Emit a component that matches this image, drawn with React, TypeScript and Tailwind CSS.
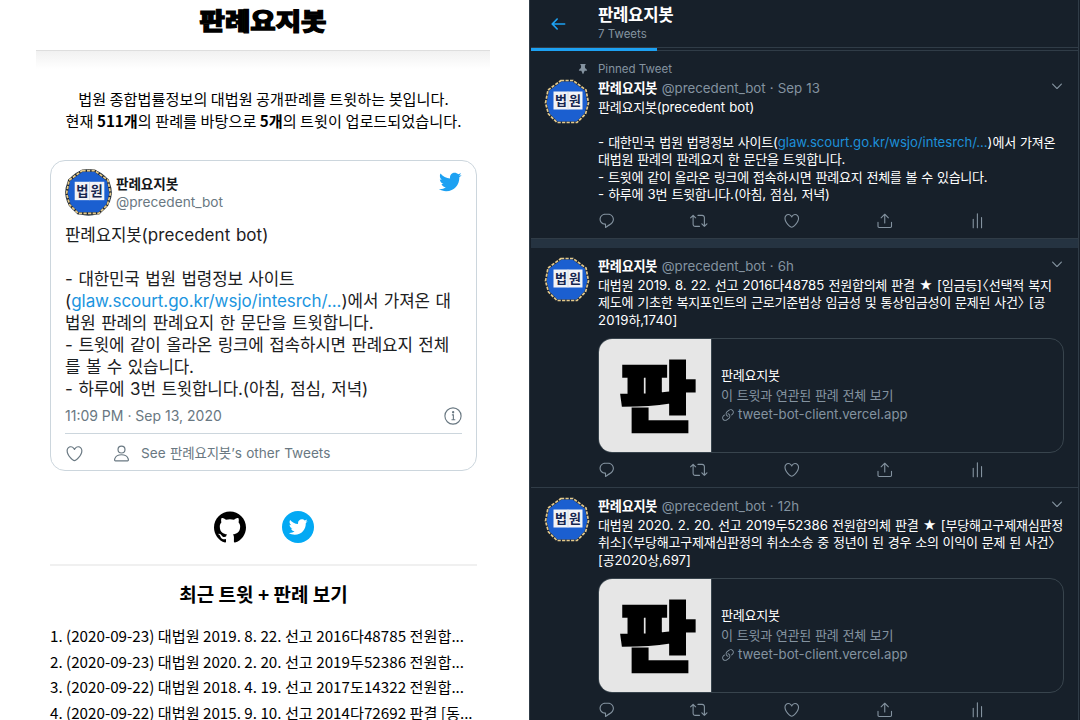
import type { ReactNode } from "react";

const P = {
  reply: ["M14.046 2.242l-4.148-.01h-.002c-4.374 0-7.8 3.427-7.8 7.802 0 4.098 3.186 7.206 7.465 7.37v3.828c0 .108.044.286.12.403.142.225.384.347.632.347.138 0 .277-.038.402-.118.264-.168 6.473-4.14 8.088-5.506 1.902-1.61 3.04-3.97 3.043-6.312v-.017c-.006-4.367-3.43-7.787-7.8-7.788zm3.787 12.972c-1.134.96-4.862 3.405-6.772 4.643V16.67c0-.414-.335-.75-.75-.75h-.396c-3.66 0-6.318-2.476-6.318-5.886 0-3.534 2.768-6.302 6.3-6.302l4.147.01h.002c3.532 0 6.3 2.766 6.302 6.296-.003 1.91-.942 3.844-2.514 5.176z"],
  retweet: ["M23.77 15.67c-.292-.293-.767-.293-1.06 0l-2.22 2.22V7.65c0-2.068-1.683-3.75-3.75-3.75h-5.85c-.414 0-.75.336-.75.75s.336.75.75.75h5.85c1.24 0 2.25 1.01 2.25 2.25v10.24l-2.22-2.22c-.293-.293-.768-.293-1.06 0s-.294.768 0 1.06l3.5 3.5c.145.147.337.22.53.22s.383-.072.53-.22l3.5-3.5c.294-.292.294-.767 0-1.06zm-10.66 3.28H7.26c-1.24 0-2.25-1.01-2.25-2.25V6.46l2.22 2.22c.148.147.34.22.532.22s.384-.073.53-.22c.293-.293.293-.768 0-1.06l-3.5-3.5c-.293-.294-.768-.294-1.06 0l-3.5 3.5c-.294.292-.294.767 0 1.06s.767.293 1.06 0l2.22-2.22V16.7c0 2.068 1.683 3.75 3.75 3.75h5.85c.414 0 .75-.336.75-.75s-.337-.75-.75-.75z"],
  like: ["M12 21.638h-.014C9.403 21.59 1.95 14.856 1.95 8.478c0-3.064 2.525-5.754 5.403-5.754 2.29 0 3.83 1.58 4.646 2.73.814-1.148 2.354-2.73 4.645-2.73 2.88 0 5.404 2.69 5.404 5.755 0 6.376-7.454 13.11-10.037 13.157H12zM7.354 4.225c-2.08 0-3.903 1.988-3.903 4.255 0 5.74 7.034 11.596 8.55 11.658 1.518-.062 8.55-5.917 8.55-11.658 0-2.267-1.823-4.255-3.903-4.255-2.528 0-3.94 2.936-3.952 2.965-.23.562-1.156.562-1.387 0-.014-.03-1.425-2.965-3.954-2.965z"],
  share: [
    "M17.53 7.47l-5-5c-.293-.293-.768-.293-1.06 0l-5 5c-.294.293-.294.768 0 1.06s.767.294 1.06 0l3.72-3.72V15c0 .414.336.75.75.75s.75-.336.75-.75V4.81l3.72 3.72c.146.147.338.22.53.22s.384-.072.53-.22c.293-.293.293-.767 0-1.06z",
    "M19.708 21.944H4.292C3.028 21.944 2 20.916 2 19.652V14c0-.414.336-.75.75-.75s.75.336.75.75v5.652c0 .437.355.792.792.792h15.416c.437 0 .792-.355.792-.792V14c0-.414.336-.75.75-.75s.75.336.75.75v5.652c0 1.264-1.028 2.292-2.292 2.292z",
  ],
  back: ["M20 11H7.414l4.293-4.293c.39-.39.39-1.023 0-1.414s-1.023-.39-1.414 0l-6 6c-.39.39-.39 1.023 0 1.414l6 6c.195.195.45.293.707.293s.512-.098.707-.293c.39-.39.39-1.023 0-1.414L7.414 13H20c.553 0 1-.447 1-1s-.447-1-1-1z"],
  pin: ["M20.235 14.61c-.375-1.745-2.342-3.506-4.01-4.125l-.544-4.948 1.495-2.242c.157-.236.172-.538.037-.787-.134-.25-.392-.403-.675-.403h-9.14c-.284 0-.542.154-.676.403-.134.25-.12.553.038.788l1.498 2.247-.484 4.943c-1.668.62-3.633 2.38-4.004 4.116-.04.16-.016.404.132.594.103.132.304.29.68.29H8.64l2.904 6.712c.078.184.26.302.458.302s.38-.118.46-.302l2.903-6.713h4.057c.376 0 .576-.156.68-.286.146-.188.172-.434.135-.59z"],
  caret: ["M20.207 8.147c-.39-.39-1.023-.39-1.414 0L12 14.94 5.207 8.147c-.39-.39-1.023-.39-1.414 0-.39.39-.39 1.023 0 1.414l7.5 7.5c.195.196.45.294.707.294s.512-.098.707-.293l7.5-7.5c.39-.39.39-1.022 0-1.413z"],
  link: [
    "M11.96 14.945c-.067 0-.136-.01-.203-.027-1.13-.318-2.097-.986-2.795-1.932-.832-1.125-1.176-2.508-.968-3.893s.942-2.605 2.068-3.438l3.53-2.608c2.322-1.716 5.61-1.224 7.33 1.1.83 1.127 1.175 2.51.967 3.895s-.943 2.605-2.07 3.438l-1.48 1.094c-.333.246-.804.175-1.05-.158-.246-.334-.176-.804.158-1.05l1.48-1.095c.803-.592 1.327-1.463 1.476-2.45.148-.988-.098-1.975-.69-2.778-1.225-1.656-3.572-2.01-5.23-.784l-3.53 2.608c-.802.593-1.326 1.464-1.475 2.45-.15.99.097 1.975.69 2.778.498.675 1.187 1.15 1.992 1.377.4.114.633.528.52.928-.092.33-.394.547-.722.547z",
    "M7.27 22.054c-1.61 0-3.197-.735-4.225-2.125-.832-1.127-1.176-2.51-.968-3.894s.943-2.605 2.07-3.438l1.478-1.094c.334-.245.805-.175 1.05.158s.177.804-.157 1.05l-1.48 1.095c-.803.593-1.326 1.464-1.475 2.45-.148.99.097 1.975.69 2.778 1.225 1.657 3.57 2.01 5.23.785l3.528-2.608c1.658-1.225 2.01-3.57.785-5.23-.498-.674-1.187-1.15-1.992-1.376-.4-.113-.633-.527-.52-.927.112-.4.528-.63.926-.522 1.13.318 2.096.986 2.794 1.932 1.717 2.324 1.224 5.612-1.1 7.33l-3.53 2.608c-.933.693-2.023 1.026-3.105 1.026z",
  ],
  bird: ["M23.643 4.937c-.835.37-1.732.62-2.675.733.962-.576 1.7-1.49 2.048-2.578-.9.534-1.897.922-2.958 1.13-.85-.904-2.06-1.47-3.4-1.47-2.572 0-4.658 2.086-4.658 4.66 0 .364.042.718.12 1.06-3.873-.195-7.304-2.05-9.602-4.868-.4.69-.63 1.49-.63 2.342 0 1.616.823 3.043 2.072 3.878-.764-.025-1.482-.234-2.11-.583v.06c0 2.257 1.605 4.14 3.737 4.568-.392.106-.803.162-1.227.162-.3 0-.593-.028-.877-.082.593 1.85 2.313 3.198 4.352 3.234-1.595 1.25-3.604 1.995-5.786 1.995-.376 0-.747-.022-1.112-.065 2.062 1.323 4.51 2.093 7.14 2.093 8.57 0 13.255-7.098 13.255-13.254 0-.2-.005-.402-.014-.602.91-.658 1.7-1.477 2.323-2.41z"],
  github: ["M12 .297c-6.63 0-12 5.373-12 12 0 5.303 3.438 9.8 8.205 11.385.6.113.82-.258.82-.577 0-.285-.01-1.04-.015-2.04-3.338.724-4.042-1.61-4.042-1.61C4.422 18.07 3.633 17.7 3.633 17.7c-1.087-.744.084-.729.084-.729 1.205.084 1.838 1.236 1.838 1.236 1.07 1.835 2.809 1.305 3.495.998.108-.776.417-1.305.76-1.605-2.665-.3-5.466-1.332-5.466-5.93 0-1.31.465-2.38 1.235-3.22-.135-.303-.54-1.523.105-3.176 0 0 1.005-.322 3.3 1.23.96-.267 1.98-.399 3-.405 1.02.006 2.04.138 3 .405 2.28-1.552 3.285-1.23 3.285-1.23.645 1.653.24 2.873.12 3.176.765.84 1.23 1.91 1.23 3.22 0 4.61-2.805 5.625-5.475 5.92.42.36.81 1.096.81 2.22 0 1.606-.015 2.896-.015 3.286 0 .315.21.69.825.57C20.565 22.092 24 17.592 24 12.297c0-6.627-5.373-12-12-12"],
};

function Icon({ name, className }: { name: keyof typeof P; className: string }) {
  return (
    <svg viewBox="0 0 24 24" fill="currentColor" className={className}>
      {P[name].map((d) => <path key={d} d={d} />)}
    </svg>
  );
}

// Hangul runs are set slightly tighter than the Latin text around them.
function Mixed({ text }: { text: string }) {
  return (
    <>
      {text.split(/([가-힣]+|〈|〉)/).map((s, i) => {
        if (s === "〈") return <span key={i} className="inline-flex w-[7px] justify-end">{s}</span>;
        if (s === "〉") return <span key={i} className="inline-flex w-[7px] justify-start">{s}</span>;
        return i % 2 ? <i key={i} className="text-[0.99em] not-italic">{s}</i> : s;
      })}
    </>
  );
}

function Line({ children, className = "" }: { children: ReactNode; className?: string }) {
  return (
    <div className={`w-fit whitespace-nowrap ${className}`}>
      {typeof children === "string" ? <Mixed text={children} /> : children}
    </div>
  );
}

const badge = "M17 1.500H29L42 11L44.500 24L41.500 35L33 43.500H13L4.500 35L1.500 24L4 11Z";

function Avatar({ round, className }: { round?: boolean; className: string }) {
  return (
    <svg viewBox="0 0 46 46" className={className}>
      {round && <circle cx="23" cy="23" r="22.8" fill="#34404a" />}
      <path d={badge} fill="#1b5fd0" stroke="#1d2430" strokeWidth="2.200" strokeLinejoin="round" />
      <path d={badge} fill="none" stroke="#e3c98a" strokeWidth="1.700" strokeDasharray="3.2 1.300" strokeLinejoin="round" />
      <rect x="9.500" y="12.500" width="29" height="18" fill="#f1f3f7" />
      <path d="M24 12.500V30.500" stroke="#d3d8e2" strokeWidth=".8" />
      <text x="16.900" y="26.200" textAnchor="middle" fill="#16264f" className="font-['Noto_Sans_CJK_KR',sans-serif] text-[13px] font-bold">법</text>
      <text x="31" y="26.200" textAnchor="middle" fill="#16264f" className="font-['Noto_Sans_CJK_KR',sans-serif] text-[13px] font-bold">원</text>
    </svg>
  );
}

const recent = [
  "1. (2020-09-23) 대법원 2019. 8. 22. 선고 2016다48785 전원합...",
  "2. (2020-09-23) 대법원 2020. 2. 20. 선고 2019두52386 전원합...",
  "3. (2020-09-22) 대법원 2018. 4. 19. 선고 2017도14322 전원합...",
  "4. (2020-09-22) 대법원 2015. 9. 10. 선고 2014다72692 판결 [동...",
];

function EmbeddedTweet() {
  return (
    <article className="mt-[29px] h-[311px] rounded-[15px] border border-[#ccd6dd] px-[14px] pt-2 font-['Inter','Noto_Sans_CJK_KR',sans-serif] [&_i]:tracking-[-0.01em]">
      <div className="flex h-[48px]">
        <Avatar round className="size-[47px]" />
        <div className="ml-[4px] pt-[6px] leading-[18px]">
          <Line className="h-[18px] text-[13.800px] font-bold text-[#14171a]">판례요지봇</Line>
          <Line className="h-[18px] text-[13.700px] text-[#697882]">@precedent_bot</Line>
        </div>
        <Icon name="bird" className="ml-auto mt-[1px] size-[24px] text-[#1da1f2]" />
      </div>
      <div className="mt-[7px] text-[17px] leading-[22px] text-[#1c2022] [word-spacing:0.8px]">
        <Line className="h-[22px] tracking-[0.05px]">판례요지봇(precedent bot)</Line>
        <Line className="h-[22px]">{" "}</Line>
        <Line className="h-[22px]">- 대한민국 법원 법령정보 사이트</Line>
        <Line className="h-[22px]">
          (<span className="tracking-[-0.06px] text-[#1b95e0]">glaw.scourt.go.kr/wsjo/intesrch/...</span>)<Mixed text="에서 가져온 대" />
        </Line>
        <Line className="h-[22px]">법원 판례의 판례요지 한 문단을 트윗합니다.</Line>
        <Line className="h-[22px]">- 트윗에 같이 올라온 링크에 접속하시면 판례요지 전체</Line>
        <Line className="h-[22px]">를 볼 수 있습니다.</Line>
        <Line className="h-[22px]">- 하루에 3번 트윗합니다.(아침, 점심, 저녁)</Line>
      </div>
      <div className="flex h-[34px] items-center justify-between border-b border-[#ccd6dd] pb-[1px] text-[#697882]">
        <Line className="text-[14px] leading-5">11:09 PM · Sep 13, 2020</Line>
        <svg viewBox="0 0 24 24" className="size-[18px]" fill="none" stroke="currentColor" strokeWidth="1.500">
          <circle cx="12" cy="12" r="10.800" />
          <path d="M10.500 10.500H12.500V17M10 17H15" />
          <circle cx="12.200" cy="7" r=".8" fill="currentColor" />
        </svg>
      </div>
      <div className="flex h-[38px] items-center text-[#697882]">
        <Icon name="like" className="size-[19px]" />
        <svg viewBox="0 0 24 24" className="ml-[28px] size-[19px]" fill="none" stroke="currentColor" strokeWidth="1.500">
          <circle cx="12" cy="7" r="4.400" />
          <path d="M4.200 21.200C2.900 21.200 3.200 19.500 3.700 18.200C5 15 8 13.600 12 13.600S19 15 20.300 18.200C20.800 19.500 21.100 21.200 19.800 21.200Z" />
        </svg>
        <Line className="ml-[10px] text-[13.600px] leading-5 [word-spacing:0.5px]">See 판례요지봇’s other Tweets</Line>
      </div>
    </article>
  );
}

function Landing() {
  return (
    <section className="h-full w-[529px] bg-white pl-[36px] pr-[39px] font-['Noto_Sans_CJK_KR',sans-serif] text-black">
      <header className="flex h-[51px] items-center justify-center border-b border-[#dedede] pb-[10px]">
        <h1 className="scale-y-[0.86] whitespace-nowrap text-[27.600px] font-black leading-[40px] [-webkit-text-stroke:1.400px_black]">판례요지봇</h1>
      </header>
      <div className="h-[18px] bg-linear-to-b from-[#f1f1f1] to-white" />
      <main className="pl-[14px] pr-[13px]">
        <div className="mt-[18px] flex flex-col items-center whitespace-nowrap text-[15.200px] leading-[22px]">
          <p className="h-[22px]">법원 종합법률정보의 대법원 공개판례를 트윗하는 봇입니다.</p>
          <p className="h-[22px]">현재 <b>511개</b>의 판례를 바탕으로 <b>5개</b>의 트윗이 업로드되었습니다.</p>
        </div>
        <EmbeddedTweet />
        <div className="flex h-[95px] items-center justify-center gap-[36px] border-b-2 border-[#f0f0f0] pt-[18px]">
          <Icon name="github" className="size-[32px]" />
          <span className="flex size-[32px] items-center justify-center rounded-full bg-[#03a9f4] text-white">
            <Icon name="bird" className="size-[20px]" />
          </span>
        </div>
        <h2 className="mt-[13px] text-center text-[19px] font-bold leading-[30px]">최근 트윗 + 판례 보기</h2>
        <ol className="mt-[14px] whitespace-nowrap text-[15.200px] leading-[25.500px]">
          {recent.map((t) => <li key={t} className="h-[25.500px]">{t}</li>)}
        </ol>
      </main>
    </section>
  );
}

function Actions() {
  return (
    <div className="-ml-[0.500px] flex h-[18px] items-center gap-[75.400px] text-[#8493a0]">
      <Icon name="reply" className="size-[17.500px]" />
      <Icon name="retweet" className="size-[17.500px]" />
      <Icon name="like" className="size-[17.500px]" />
      <Icon name="share" className="size-[17.500px]" />
      <svg viewBox="0 0 24 24" className="size-[17.500px]" stroke="currentColor" strokeWidth="1.500" strokeLinecap="round">
        <path d="M5.800 10V21.500M11.500 2.500V21.500M17.200 7.500V21.500" />
      </svg>
    </div>
  );
}

function Tweet({ time, pinned, children, card, className }: { time: string; pinned?: boolean; children: ReactNode; card?: boolean; className: string }) {
  return (
    <article className={`border-b border-[#303c47] px-[13px] ${className}`}>
      {pinned && (
        <div className="flex h-[19px] items-center text-[#8493a0]">
          <Icon name="pin" className="ml-[33px] size-[12px]" />
          <Line className="ml-[9px] text-[11.540px] leading-4">Pinned Tweet</Line>
        </div>
      )}
      <div className="flex">
        <Avatar className="mt-[1px] size-[46px] shrink-0" />
        <div className="ml-[8px] w-[466px]">
          <div className="flex h-[19px] items-center justify-between">
            <div className="flex items-center leading-[18px]">
              <Line className="text-[13.300px] font-bold text-white">판례요지봇</Line>
              <Line className="ml-[4.500px] text-[13.300px] text-[#8493a0] [word-spacing:0.4px]">{`@precedent_bot · ${time}`}</Line>
            </div>
            <Icon name="caret" className="mb-[3px] size-[14px] text-[#8493a0]" />
          </div>
          <div className="pt-[2px]">
            <div className="text-[13.200px] leading-[17.400px] text-white [word-spacing:0.35px]">{children}</div>
          </div>
          {card && (
            <div className="mt-[9px] flex h-[115px] overflow-hidden rounded-[14px] border border-[#38444d]">
              <div className="flex w-[113px] shrink-0 items-center justify-center border-r border-[#38444d] bg-[#e6e6e6]">
                <span className="relative -top-[4px] left-[3px] scale-x-[1.03] scale-y-[0.94] font-['Noto_Sans_CJK_KR',sans-serif] text-[80px] font-black leading-none text-black [-webkit-text-stroke:3.500px_black]">판</span>
              </div>
              <div className="pl-[9px] pt-[27px] text-[13.200px] leading-[19.600px] text-[#8493a0] [word-spacing:0.2px]">
                <Line className="h-[19.600px] text-white">판례요지봇</Line>
                <Line className="h-[19.600px]">이 트윗과 연관된 판례 전체 보기</Line>
                <div className="flex h-[19.600px] items-center">
                  <Icon name="link" className="mr-[3px] size-[14px]" />
                  <Line>tweet-bot-client.vercel.app</Line>
                </div>
              </div>
            </div>
          )}
          <div className="mt-[8px]"><Actions /></div>
        </div>
      </div>
    </article>
  );
}

const row = "h-[17.400px]";

function Timeline() {
  return (
    <section className="h-full w-[550px] border-x border-[#303c47] bg-[#17202a] pl-[1px] font-['Inter','Noto_Sans_CJK_KR',sans-serif] [&_i]:tracking-[-0.02em]">
      <header className="flex h-[47px] items-center pl-[17px] text-white">
        <Icon name="back" className="size-[20px] text-[#1da1f2]" />
        <div className="ml-[30px] pb-[1px]">
          <Line className="h-[21px] text-[16.900px] font-bold leading-[21px]">판례요지봇</Line>
          <Line className="h-[16px] text-[11.500px] leading-[17px] text-[#8493a0]">7 Tweets</Line>
        </div>
      </header>
      <div className="h-[4px] border-y border-[#303c47]">
        <div className="h-[3px] w-[126px] bg-[#1da1f2]" />
      </div>
      <Tweet time="Sep 13" pinned className="h-[188px] pt-[8px]">
        <Line className={row}>판례요지봇(precedent bot)</Line>
        <Line className={row}>{" "}</Line>
        <Line className={row}>
          <Mixed text="- 대한민국 법원 법령정보 사이트(" /><span className="tracking-[-0.04px] text-[#1d8fd8]">glaw.scourt.go.kr/wsjo/intesrch/...</span><Mixed text=")에서 가져온" />
        </Line>
        <Line className={row}>대법원 판례의 판례요지 한 문단을 트윗합니다.</Line>
        <Line className={`${row} [word-spacing:0.2px]`}>- 트윗에 같이 올라온 링크에 접속하시면 판례요지 전체를 볼 수 있습니다.</Line>
        <Line className={row}>- 하루에 3번 트윗합니다.(아침, 점심, 저녁)</Line>
      </Tweet>
      <div className="h-[9px] bg-[#253341]" />
      <Tweet time="6h" card className="h-[240px] pt-[8px]">
        <Line className={`${row} [word-spacing:0.45px]`}>대법원 2019. 8. 22. 선고 2016다48785 전원합의체 판결 ★ [임금등]〈선택적 복지</Line>
        <Line className={`${row} [word-spacing:0.3px]`}>제도에 기초한 복지포인트의 근로기준법상 임금성 및 통상임금성이 문제된 사건〉 [공</Line>
        <Line className={`${row} tracking-[0.15px]`}>2019하,1740]</Line>
      </Tweet>
      <Tweet time="12h" card className="h-[240px] pt-[8px]">
        <Line className={`${row} [word-spacing:0.5px]`}>대법원 2020. 2. 20. 선고 2019두52386 전원합의체 판결 ★ [부당해고구제재심판정</Line>
        <Line className={`${row} [word-spacing:0.2px]`}>취소]〈부당해고구제재심판정의 취소소송 중 정년이 된 경우 소의 이익이 문제 된 사건〉</Line>
        <Line className={row}>[공2020상,697]</Line>
      </Tweet>
    </section>
  );
}

export default function App() {
  return (
    <div className="flex h-[720px] w-[1080px] overflow-hidden bg-[#17202a]">
      <Landing />
      <Timeline />
    </div>
  );
}
